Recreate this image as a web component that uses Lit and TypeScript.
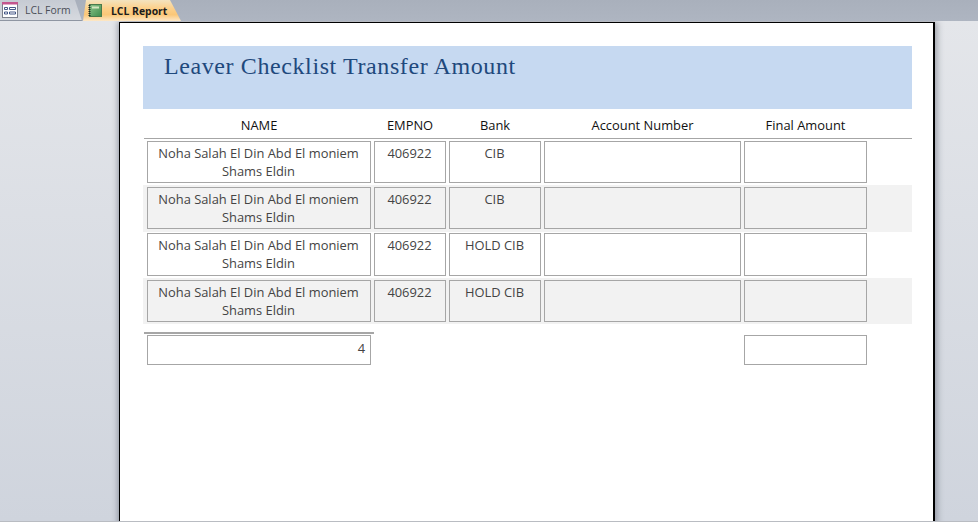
import { LitElement, html, css } from "lit";
import { customElement } from "lit/decorators.js";

const rows = [
  { bank: "CIB", h: 46, alt: false, tall: false },
  { bank: "CIB", h: 47, alt: true, tall: false },
  { bank: "HOLD CIB", h: 46, alt: false, tall: true },
  { bank: "HOLD CIB", h: 46, alt: true, tall: false },
];

@customElement("app-root")
export class AppRoot extends LitElement {
  static styles = css`
    :host { display: block; width: 978px; height: 522px; overflow: hidden; font-family: "Open Sans", "Noto Sans", sans-serif; }
    .tabs { height: 21px; display: flex; background: linear-gradient(#a9b0bc, #aeb5c1); }
    .tab { display: flex; align-items: center; font-size: 10.4px; height: 21px; box-sizing: border-box; }
    .tab.form { width: 82px; padding-left: 2px; gap: 7px; color: #4a4f57; background: linear-gradient(#c6cbd3, #d6d9df); border-bottom: 1px solid #8f96a2;
      clip-path: polygon(0 0, 75px 0, 82px 100%, 0 100%); }
    .tab.report { width: 99px; margin-left: 1px; padding-left: 5px; gap: 9px; color: #1c1c1c; font-weight: 700;
      background: linear-gradient(#f3e3bf 0%, #fdd08a 40%, #fbc778 70%, #fde8c8 100%);
      clip-path: polygon(3px 0, 87px 0, 98px 100%, 0 100%); }
    .body { height: 500px; overflow: hidden; display: flex; padding-left: 119px; box-sizing: border-box; background: linear-gradient(#e4e6ea, #cfd4dd); }
    .foot { height: 1px; background: #b9bcc2; }
    .sheet { width: 816px; height: 503px; margin-top: 1px; box-sizing: border-box; background: #fff; border: 1px solid #000; border-width: 1px 2px 0 1px; box-shadow: -2px 0 5px rgba(90,96,110,.4), 3px 0 6px rgba(90,96,110,.4); padding: 23px 21px 0 23px; }
    .band { height: 63px; background: #c6d9f1; padding: 4px 0 0 21px; box-sizing: border-box; }
    .title { font-family: "Liberation Serif", serif; font-size: 24px; line-height: 32px; color: #1f497d; letter-spacing: .6px; }
    .grid { display: grid; grid-template-columns: 224px 72px 92px 197px 123px; column-gap: 3px; padding-left: 4px; }
    .heads { margin-left: 1px; padding-left: 3px; padding-top: 3px; align-items: center; border-bottom: 1px solid #a6a6a6; height: 26px; box-sizing: content-box; }
    .head { font-size: 12.9px; color: #111; text-align: center; }
    .row { padding-top: 2px; box-sizing: border-box; }
    .row.tall { padding-top: 1px; }
    .row.alt { background: #f2f2f2; }
    .cell { height: 42px; box-sizing: border-box; border: 1px solid #a6a6a6; padding: 3px 6px 0 5px; text-align: center; font-size: 12.9px; line-height: 17.5px; color: #444; }
    .row.tall .cell { height: 43px; }
    .rule { margin: 8px 0 0 1px; width: 230px; height: 2px; background: #a6a6a6; }
    .totals { padding-top: 1px; }
    .total { height: 30px; line-height: 24px; text-align: right; padding: 0 5px; }
    .spacer { grid-column: span 3; }
  `;

  render() {
    return html`
      <div class="tabs">
        <div class="tab form">
          <svg width="16" height="16" viewBox="0 0 16 16"><rect x=".5" y=".5" width="15" height="15" fill="#fff" stroke="#7a7f8a"/><rect x="0" y="0" width="16" height="2.5" fill="#c4568e"/><path d="M2.5 5.5h3v2h-3zM2.5 10h3v2h-3zM7.5 5.5h6v2h-6zM7.5 10h6v2h-6z" fill="#fff" stroke="#33487c" stroke-width=".9"/></svg>
          <span>LCL Form</span>
        </div>
        <div class="tab report">
          <svg width="14" height="13" viewBox="0 0 14 13"><defs><linearGradient id="g" x1="0" y1="0" x2="1" y2="1"><stop offset="0" stop-color="#8cc48a"/><stop offset="1" stop-color="#3f8c4c"/></linearGradient></defs><rect x="1.5" y=".5" width="12" height="12" fill="url(#g)" stroke="#4a7a4c"/><rect x="4" y="2.5" width="7" height="2" fill="#d4e6bf"/><path d="M1.5 1v11" stroke="#222" stroke-width="2" stroke-dasharray="1 1"/></svg>
          <span>LCL Report</span>
        </div>
      </div>
      <div class="body">
        <div class="sheet">
          <div class="band"><span class="title">Leaver Checklist Transfer Amount</span></div>
          <div class="grid heads">
            <div class="head">NAME</div><div class="head">EMPNO</div><div class="head">Bank</div><div class="head">Account Number</div><div class="head">Final Amount</div>
          </div>
          ${rows.map((r) => html`
            <div class="grid row ${r.alt ? "alt" : ""} ${r.tall ? "tall" : ""}" style="height:${r.h}px">
              <div class="cell">Noha Salah El Din Abd El moniem Shams Eldin</div>
              <div class="cell">406922</div>
              <div class="cell">${r.bank}</div>
              <div class="cell"></div>
              <div class="cell"></div>
            </div>`)}
          <div class="rule"></div>
          <div class="grid totals">
            <div class="cell total">4</div>
            <div class="spacer"></div>
            <div class="cell total"></div>
          </div>
        </div>
      </div>
      <div class="foot"></div>
    `;
  }
}
